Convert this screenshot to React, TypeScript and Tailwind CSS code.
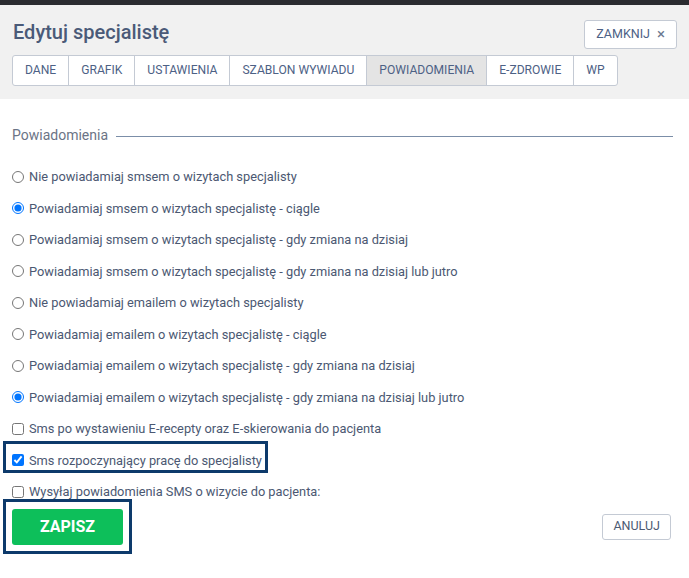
import React from 'react';

const tabs = ['DANE', 'GRAFIK', 'USTAWIENIA', 'SZABLON WYWIADU', 'POWIADOMIENIA', 'E-ZDROWIE', 'WP'];

const radios = [
    { label: 'Nie powiadamiaj smsem o wizytach specjalisty', checked: false },
    { label: 'Powiadamiaj smsem o wizytach specjalistę - ciągle', checked: true },
    { label: 'Powiadamiaj smsem o wizytach specjalistę - gdy zmiana na dzisiaj', checked: false },
    { label: 'Powiadamiaj smsem o wizytach specjalistę - gdy zmiana na dzisiaj lub jutro', checked: false },
    { label: 'Nie powiadamiaj emailem o wizytach specjalisty', checked: false, group: 'email' },
    { label: 'Powiadamiaj emailem o wizytach specjalistę - ciągle', checked: false, group: 'email' },
    { label: 'Powiadamiaj emailem o wizytach specjalistę - gdy zmiana na dzisiaj', checked: false, group: 'email' },
    { label: 'Powiadamiaj emailem o wizytach specjalistę - gdy zmiana na dzisiaj lub jutro', checked: true, group: 'email' },
];

export default function App() {
    return (
        <div className="w-[689px] h-[578px] bg-white overflow-hidden text-[#4b5872]" style={{ fontFamily: 'Roboto, "Liberation Sans", sans-serif' }}>
            <div className="h-[5px] bg-[#2b2c30]" />
            <div className="bg-[#f1f1f1] h-[94px] px-3 pt-[13px]">
                <div className="h-[37px] flex justify-between items-start">
                    <h1 className="text-[20px] leading-[28px] font-medium text-[#4a5a78] ml-[1px]">Edytuj specjalistę</h1>
                    <button className="mt-[2px] h-[29px] px-[11px] flex items-center gap-[7px] border border-[#c4cad4] rounded-[3px] bg-white text-[12.5px] text-[#4d6185] whitespace-nowrap">
                        ZAMKNIJ
                        <span className="text-[15px] leading-none text-[#6b7890]">×</span>
                    </button>
                </div>
                <div className="flex w-fit h-[31px] border border-[#c4cad4] rounded-[3px] bg-white overflow-hidden">
                    {tabs.map((t, i) => (
                        <div
                            key={t}
                            className={`px-3 flex items-center whitespace-nowrap text-[12.1px] text-[#4d6185] ${i > 0 ? 'border-l border-[#c4cad4]' : ''} ${t === 'POWIADOMIENIA' ? 'bg-[#e4e4e4]' : ''}`}
                        >
                            {t}
                        </div>
                    ))}
                </div>
            </div>

            <div className="px-3">
                <div className="flex items-center mt-[26px] h-[20px]">
                    <span className="text-[14px] text-[#6b7486]">Powiadomienia</span>
                    <div className="flex-1 ml-[8px] h-px bg-[#7b8ea8] mt-[3px]" style={{ maxWidth: 557 }} />
                </div>

                <div className="mt-[16px] flex flex-col text-[12.8px]">
                    {radios.map((r, i) => (
                        <label key={i} className="h-[31.5px] flex items-center gap-[5px]">
                            <input type="radio" name={r.group ?? 'sms'} defaultChecked={r.checked} className="m-0 w-[12px] h-[12px]" />
                            <span>{r.label}</span>
                        </label>
                    ))}
                    <label className="h-[31.5px] flex items-center gap-[5px]">
                        <input type="checkbox" className="m-0 w-[12px] h-[12px]" />
                        <span>Sms po wystawieniu E-recepty oraz E-skierowania do pacjenta</span>
                    </label>
                    <label className="relative h-[31.5px] flex items-center gap-[5px]">
                        <input type="checkbox" defaultChecked className="m-0 w-[12px] h-[12px]" />
                        <span>Sms rozpoczynający pracę do specjalisty</span>
                        <span className="absolute left-[-9px] top-[-4px] w-[265px] h-[32px] border-[3px] border-[#0d3a6b]" />
                    </label>
                    <label className="h-[31.5px] flex items-center gap-[5px]">
                        <input type="checkbox" className="m-0 w-[12px] h-[12px]" />
                        <span>Wysyłaj powiadomienia SMS o wizycie do pacjenta:</span>
                    </label>
                </div>

                <div className="mt-[1px] flex items-center justify-between pr-[6px]">
                    <div className="relative">
                        <button className="w-[111px] h-[36px] rounded-[3px] bg-[#0dbf5a] text-white text-[16px] font-bold">ZAPISZ</button>
                        <span className="absolute left-[-9px] top-[-10px] w-[129px] h-[55px] border-[3px] border-[#0d3a6b]" />
                    </div>
                    <button className="h-[26px] px-[10px] border border-[#c4cad4] rounded-[3px] bg-white text-[12.5px] text-[#4d5a72]">ANULUJ</button>
                </div>
            </div>
        </div>
    );
}
